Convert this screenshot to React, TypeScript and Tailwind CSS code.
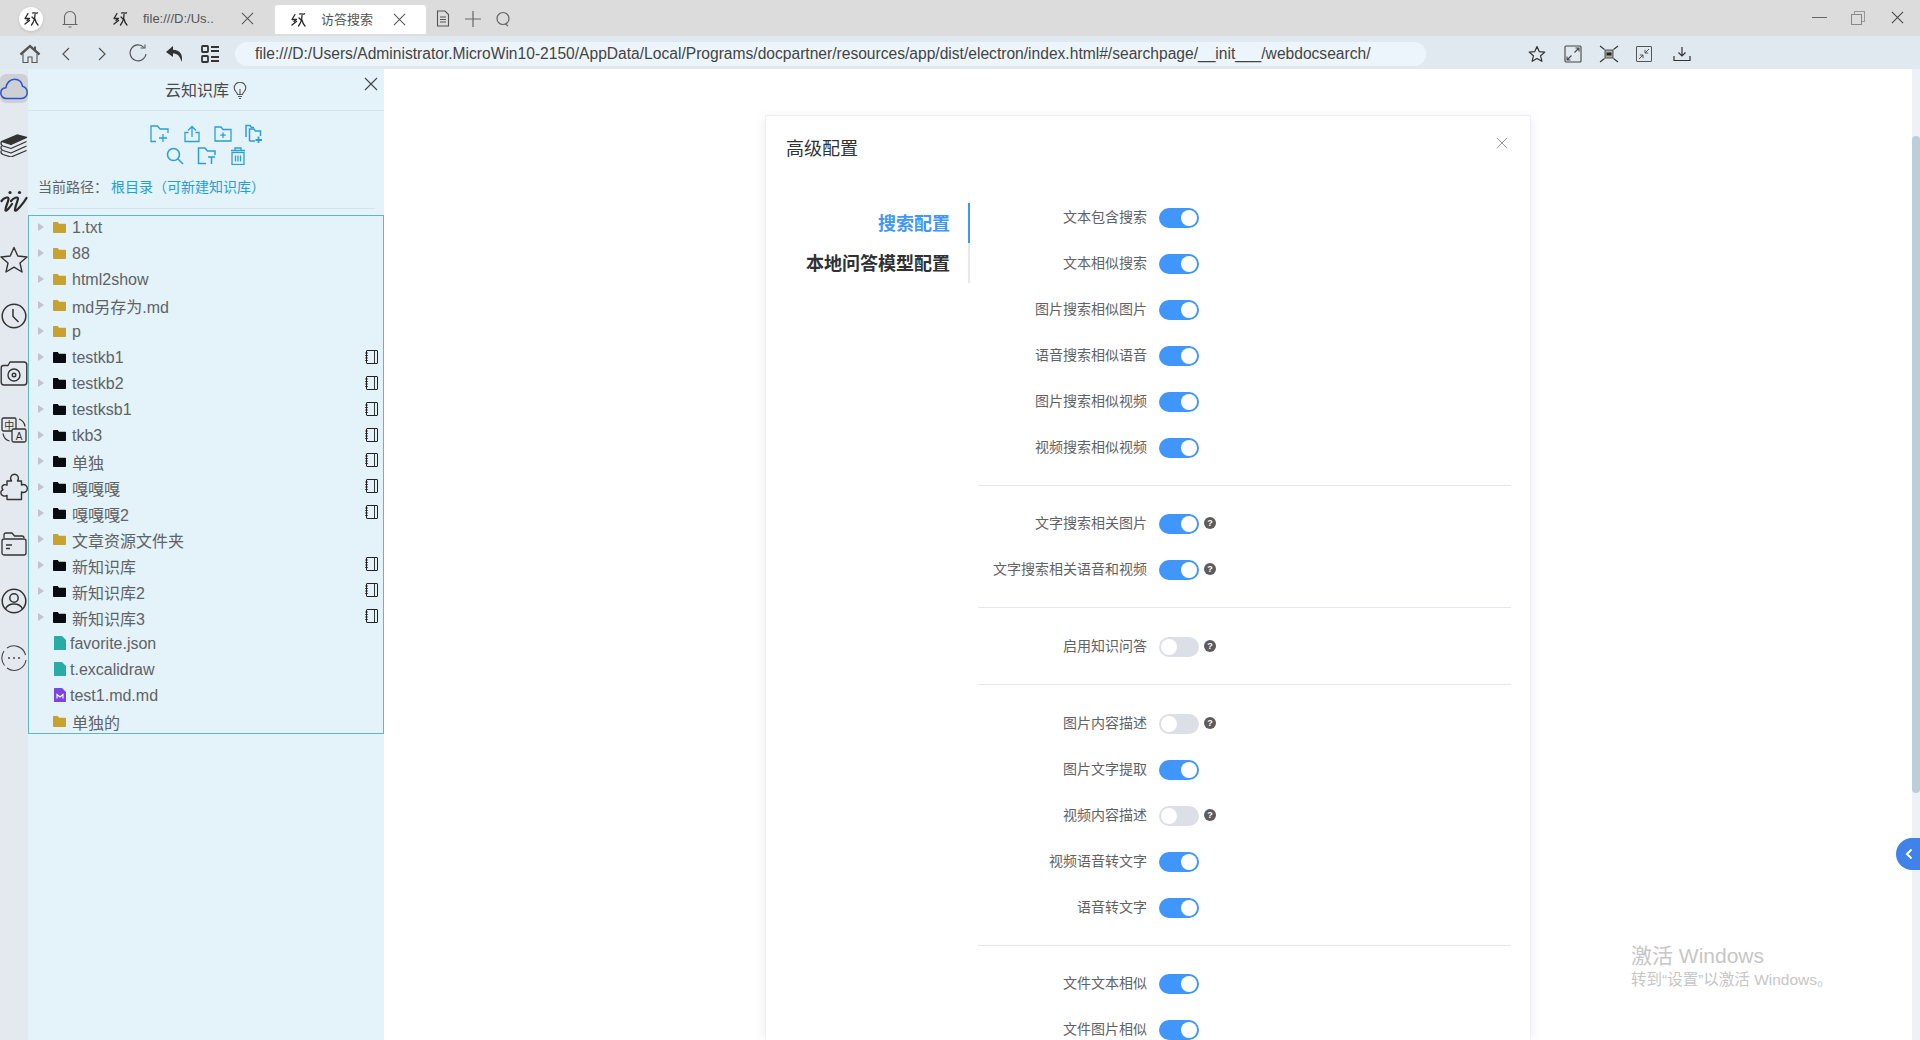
import React from "react";

const Logo = () => (
  <svg width="16" height="16" viewBox="0 0 16 16" fill="none" stroke="#2b2b2b" strokeWidth="1.3" strokeLinecap="round" strokeLinejoin="round">
    <path d="M5 2.5 L2 7.5 H6.5 L4 9.5 M2 13 L6.5 9.5" />
    <path d="M9.5 2 C11 1.2 12.5 2.8 14.5 1.8" />
    <path d="M12 3.5 C12 7 10.8 11 8.5 14 M12 8 C12.5 10.5 13.5 12.5 15 14" />
    <path d="M9 6 L10.5 7.5" />
  </svg>
);

const Bell = () => (
  <svg width="18" height="20" viewBox="0 0 18 20" fill="none" stroke="#666" strokeWidth="1.1">
    <path d="M3.5 15 V8 a5.5 5.5 0 0 1 11 0 V15 M1.5 15.5 H16.5 M7.5 18 H10.5" />
  </svg>
);

const X = ({ size = 14, color = "#555", w = 1.1 }: { size?: number; color?: string; w?: number }) => (
  <svg width={size} height={size} viewBox="0 0 14 14" fill="none" stroke={color} strokeWidth={w}>
    <path d="M1 1 L13 13 M13 1 L1 13" />
  </svg>
);

const FileDoc = () => (
  <svg width="14" height="17" viewBox="0 0 14 17" fill="none" stroke="#555" strokeWidth="1.1">
    <path d="M1.5 1 H9 L12.5 4.5 V16 H1.5 Z M4 7 H10 M4 9.5 H10 M4 12 H10" />
  </svg>
);

const Plus = () => (
  <svg width="18" height="18" viewBox="0 0 18 18" stroke="#666" strokeWidth="1.2">
    <path d="M9 1 V17 M1 9 H17" />
  </svg>
);

const SearchO = () => (
  <svg width="16" height="16" viewBox="0 0 16 16" fill="none" stroke="#666" strokeWidth="1.2">
    <circle cx="8" cy="7.5" r="6" />
    <path d="M10.5 13 L13 15" />
  </svg>
);

const Home = () => (
  <svg width="22" height="20" viewBox="0 0 22 20" fill="none" stroke="#555">
    <path d="M1.5 10.5 L11 2 L20.5 10.5" strokeWidth="2.4" />
    <path d="M4 10 V18.5 H9 V13 H13 V18.5 H18 V10" strokeWidth="1.1" />
    <path d="M16 2.5 V6" strokeWidth="2" />
  </svg>
);

const Chevron = ({ right }: { right?: boolean }) => (
  <svg width="10" height="16" viewBox="0 0 10 16" fill="none" stroke="#555" strokeWidth="1.2">
    <path d={right ? "M2 2 L8 8 L2 14" : "M8 2 L2 8 L8 14"} />
  </svg>
);

const Reload = () => (
  <svg width="20" height="20" viewBox="0 0 20 20" fill="none" stroke="#555" strokeWidth="1.1">
    <path d="M16 3.5 A8 8 0 1 0 18 10" />
    <path d="M12.5 4 H17 V0.5" />
  </svg>
);

const Undo = () => (
  <svg width="20" height="18" viewBox="0 0 20 18" fill="#333">
    <path d="M8 1 L1 7 L8 12 V8.5 C12 8.5 15 10.5 16.5 17 C18.5 10 15 5 8 4.8 Z" />
  </svg>
);

const ListGrid = () => (
  <svg width="19" height="20" viewBox="0 0 19 20" fill="none" stroke="#333" strokeWidth="1.8">
    <rect x="1" y="2" width="6" height="6" rx="0.8" />
    <rect x="1" y="12" width="6" height="6" rx="0.8" />
    <path d="M10 3 H18 M10 7 H18 M10 13 H18 M10 17 H18" />
  </svg>
);

const StarT = () => (
  <svg width="18" height="18" viewBox="0 0 18 18" fill="none" stroke="#333" strokeWidth="1.2" strokeLinejoin="round">
    <path d="M9 1.5 L11.2 6.6 L16.8 7.1 L12.6 10.8 L13.9 16.3 L9 13.4 L4.1 16.3 L5.4 10.8 L1.2 7.1 L6.8 6.6 Z" />
  </svg>
);

const ExpandBox = () => (
  <svg width="18" height="18" viewBox="0 0 18 18" fill="none" stroke="#444" strokeWidth="1.1">
    <rect x="1" y="1" width="16" height="16" rx="1" />
    <path d="M10.5 7.5 L15 3 M11.5 3 H15 V6.5 M7.5 10.5 L3 15 M3 11.5 V15 H6.5" />
  </svg>
);

const FitScreen = () => (
  <svg width="20" height="18" viewBox="0 0 20 18" fill="none" stroke="#333" strokeWidth="1.1">
    <rect x="6" y="5" width="8" height="8" fill="#aaa" strokeWidth="0.8" />
    <rect x="7.5" y="7.5" width="5" height="3" fill="#222" stroke="none" />
    <path d="M1 1 L5.5 4.5 M19 1 L14.5 4.5 M1 17 L5.5 13.5 M19 17 L14.5 13.5" />
  </svg>
);

const CollapseBox = () => (
  <svg width="16" height="16" viewBox="0 0 16 16" fill="none" stroke="#555" strokeWidth="1">
    <rect x="0.5" y="0.5" width="15" height="15" rx="0.5" />
    <path d="M13 3 L9 7 M9 3.8 V7 H12.2 M3 13 L7 9 M3.8 9 H7 V12.2" />
  </svg>
);

const Download = () => (
  <svg width="18" height="16" viewBox="0 0 18 16" fill="none" stroke="#333" strokeWidth="1.2">
    <path d="M9 1 V10 M5.5 6.5 L9 10 L12.5 6.5 M1 10 V14.5 H17 V10" />
  </svg>
);

const RailCloud = () => (
  <svg width="28" height="22" viewBox="0 0 28 22" fill="none" stroke="#2b52cf" strokeWidth="1.5" strokeLinejoin="round">
    <path d="M6.5 20.5 C3 20.5 0.8 18 0.8 15 C0.8 12 3 10 5.8 9.8 C6.5 4.8 10.3 1.2 14.5 1.2 C18.8 1.2 21.8 4.2 22.5 8.3 C25.2 9 27.2 11.5 27.2 14.5 C27.2 18 24.6 20.5 21.5 20.5 Z" />
  </svg>
);

const RailBooks = () => (
  <svg width="28" height="24" viewBox="0 0 28 24" fill="none" stroke="#333" strokeWidth="1.3" strokeLinejoin="round">
    <path d="M1.5 8.5 L17 2 L26.5 4.5 L11 11.5 Z" fill="#333" />
    <path d="M1.5 8.5 C0.5 10.5 1 12 3 13 L11 15.5 L26.5 8.5" />
    <path d="M1.5 13 C0.5 15 1 16.5 3 17.5 L11 20 L26.5 13" />
    <path d="M1.5 17.5 C0.5 19 1 20.5 3 21.5 L11 24 L26.5 17.5" />
  </svg>
);

const RailWrite = () => (
  <svg width="28" height="24" viewBox="0 0 28 24" fill="none" stroke="#2a2a2a" strokeWidth="2.2" strokeLinecap="round" strokeLinejoin="round">
    <circle cx="10" cy="2.5" r="1.6" fill="#2a2a2a" stroke="none" />
    <circle cx="19.5" cy="2.5" r="1.6" fill="#2a2a2a" stroke="none" />
    <path d="M1.5 11 C4 7.5 8 6.5 8.5 8.5 C9 11 5 17 5.5 20.5 C6.5 21.5 10 17 12 14" />
    <path d="M11 11 C13.5 7.5 18 6.5 18 8.5 C18 11 14.5 17 15 20.5 C16 22 23 14 26.5 8" />
  </svg>
);

const RailStar = () => (
  <svg width="28" height="27" viewBox="0 0 28 27" fill="none" stroke="#333" strokeWidth="1.4" strokeLinejoin="round">
    <path d="M14 1.5 L17.8 10 L27 11 L20 17 L22 26 L14 21.2 L6 26 L8 17 L1 11 L10.2 10 Z" />
  </svg>
);

const RailClock = () => (
  <svg width="26" height="26" viewBox="0 0 26 26" fill="none" stroke="#333" strokeWidth="1.5">
    <circle cx="13" cy="13" r="11.8" />
    <path d="M12 6 V13.5 L17.5 19" />
  </svg>
);

const RailCamera = () => (
  <svg width="28" height="25" viewBox="0 0 28 25" fill="none" stroke="#333" strokeWidth="1.4" strokeLinejoin="round">
    <path d="M1.2 7 Q1.2 4.5 3.5 4.5 H8 L10 1 H24 Q26.8 1 26.8 4 V21 Q26.8 24 24 24 H4 Q1.2 24 1.2 21 Z" />
    <circle cx="14" cy="14" r="6" />
    <circle cx="14" cy="14" r="1.8" />
  </svg>
);

const RailTranslate = () => (
  <svg width="26" height="26" viewBox="0 0 26 26" fill="none" stroke="#333" strokeWidth="1.3">
    <rect x="1" y="1" width="14" height="13" rx="1.5" />
    <rect x="11" y="12" width="14" height="13" rx="1.5" fill="#e3e9ef" />
    <text x="3.2" y="11.5" fontSize="10" fill="#333" stroke="none" fontFamily="'Noto Sans CJK SC', sans-serif">中</text>
    <text x="14.7" y="22.5" fontSize="10" fill="#333" stroke="none" fontFamily="'Liberation Sans', sans-serif">A</text>
    <path d="M18 2 C21 3 23.5 6 24 9.5 M2 16.5 C2.5 20 5 23 8.5 24" />
  </svg>
);

const RailPuzzle = () => (
  <svg width="28" height="28" viewBox="0 0 28 28" fill="none" stroke="#333" strokeWidth="1.4" strokeLinejoin="round">
    <path d="M7 8 H11.5 C9.5 5 11 1.2 14.5 1.2 C18 1.2 19.5 5 17.5 8 H21.5 V12 C24.5 10.5 27.3 12.5 27.3 15.5 C27.3 18.5 24.5 20.5 21.5 19 V26.5 H7 V22.5 C4 24 0.8 22.5 0.8 19.5 C0.8 18.2 1.8 17.2 3 16.8 C1.5 15.5 1.5 13 3.5 12 C4.8 11.4 6 11.6 7 12.2 Z" />
  </svg>
);

const RailFolder = () => (
  <svg width="26" height="24" viewBox="0 0 26 24" fill="none" stroke="#333" strokeWidth="1.3" strokeLinejoin="round">
    <path d="M3 6 V3 Q3 1 5 1 H11 L13.5 4 H21 Q23 4 23 6" />
    <rect x="1" y="7" width="24" height="16" rx="2" />
    <path d="M5 13 H11 M5 16.5 H9" />
  </svg>
);

const RailUser = () => (
  <svg width="26" height="26" viewBox="0 0 26 26" fill="none" stroke="#333" strokeWidth="1.5">
    <circle cx="13" cy="13" r="11.8" />
    <circle cx="13" cy="10" r="4.2" />
    <path d="M4.5 21 C6 17.5 9 16 13 16 C17 16 20 17.5 21.5 21" />
  </svg>
);

const RailMore = () => (
  <svg width="26" height="26" viewBox="0 0 26 26" fill="none" stroke="#444" strokeWidth="1.1">
    <path d="M6 3 A12 12 0 0 1 24.5 10 M25 15 A12 12 0 0 1 6 23 M3.5 20.5 A12 12 0 0 1 3 6" />
    <circle cx="8" cy="13" r="1" fill="#444" stroke="none" />
    <circle cx="13" cy="13" r="1" fill="#444" stroke="none" />
    <circle cx="18" cy="13" r="1" fill="#444" stroke="none" />
  </svg>
);

const Bulb = () => (
  <svg width="14" height="18" viewBox="0 0 14 18" fill="none" stroke="#555" strokeWidth="1.1">
    <path d="M4.5 12.5 C4 10 1.2 9 1.2 6 A5.8 5.8 0 0 1 12.8 6 C12.8 9 10 10 9.5 12.5 Z" />
    <path d="M5 14.5 H9 M6 16.5 H8" />
    <path d="M7 7 V12" />
  </svg>
);

const C = { stroke: "#2ba0d4", fill: "none", strokeWidth: 1.3 };

const TFolderPlus = () => (
  <svg width="20" height="18" viewBox="0 0 20 18" {...C}>
    <path d="M6 16.5 H1 V1 H7.5 L10 4 H18 V8" />
    <path d="M13 9 V17 M9 13 H17" />
  </svg>
);
const TUpload = () => (
  <svg width="18" height="18" viewBox="0 0 18 18" {...C}>
    <path d="M9 12 V1.5 M5 5.5 L9 1.5 L13 5.5" />
    <path d="M5.5 7.5 H2 V16.5 H16 V7.5 H12.5" />
  </svg>
);
const TFolderAdd = () => (
  <svg width="18" height="16" viewBox="0 0 18 16" {...C}>
    <path d="M1 1 H7 L9 3.5 H17 V15 H1 Z" />
    <path d="M9 6.5 V12 M6.2 9.2 H11.8" />
  </svg>
);
const TFolders = () => (
  <svg width="18" height="20" viewBox="0 0 18 20" {...C} strokeWidth={1.5}>
    <path d="M1 13 V1.5 H5 L6.5 3.5 H9" />
    <path d="M4.5 17 V5 H9 L10.5 7 H15.5 V12 M4.5 17 H10" />
    <path d="M13.5 12.5 V19 M10.5 16 H17" strokeWidth="1.8" />
  </svg>
);
const TSearch = () => (
  <svg width="18" height="18" viewBox="0 0 18 18" {...C} strokeWidth={1.6}>
    <circle cx="7.5" cy="7.5" r="6" />
    <path d="M12 12 L17 17" />
  </svg>
);
const TFolderT = () => (
  <svg width="20" height="18" viewBox="0 0 20 18" {...C} strokeWidth={1.5}>
    <path d="M9 16.5 H1.5 V1 H8 L10.5 4 H18 V8" />
    <path d="M11 10 H18 M14.5 10 V17" />
  </svg>
);
const TTrash = () => (
  <svg width="16" height="18" viewBox="0 0 16 18" {...C}>
    <path d="M1 3.5 H15 M5 3.5 V1 H11 V3.5" />
    <rect x="2" y="5.5" width="12" height="12" />
    <path d="M5.5 8.5 V14.5 M8 8.5 V14.5 M10.5 8.5 V14.5" />
  </svg>
);

const TreeFolder = ({ color }: { color: string }) => (
  <svg width="13" height="11" viewBox="0 0 13 11" fill={color}>
    <path d="M0 0.8 Q0 0 0.8 0 H4.8 L6 1.8 H12.2 Q13 1.8 13 2.6 V10.2 Q13 11 12.2 11 H0.8 Q0 11 0 10.2 Z" />
  </svg>
);

const TreeFile = ({ color, mark }: { color: string; mark?: boolean }) => (
  <svg width="12" height="14" viewBox="0 0 12 14" fill={color}>
    <path d="M0 0.5 Q0 0 0.5 0 H8 L12 4 V13.5 Q12 14 11.5 14 H0.5 Q0 14 0 13.5 Z" />
    {mark && <path d="M3 10.5 V6.5 L6 9 L9 6.5 V10.5" fill="none" stroke="#fff" strokeWidth="1.1" />}
  </svg>
);

const Notebook = () => (
  <svg width="13" height="14" viewBox="0 0 13 14" fill="none" stroke="#222" strokeWidth="1">
    <rect x="1.5" y="0.5" width="11" height="13" rx="0.5" />
    <path d="M9.5 0.5 V13.5" strokeWidth="0.9" />
    <path d="M0 3 H3 M0 5.5 H3 M0 8 H3 M0 10.5 H3" strokeWidth="0.8" />
  </svg>
);

type TreeItem = { name: string; kind: "gold" | "black" | "teal" | "purple"; noArrow?: boolean };

const tree: TreeItem[] = [
  { name: "1.txt", kind: "gold" },
  { name: "88", kind: "gold" },
  { name: "html2show", kind: "gold" },
  { name: "md另存为.md", kind: "gold" },
  { name: "p", kind: "gold" },
  { name: "testkb1", kind: "black" },
  { name: "testkb2", kind: "black" },
  { name: "testksb1", kind: "black" },
  { name: "tkb3", kind: "black" },
  { name: "单独", kind: "black" },
  { name: "嘎嘎嘎", kind: "black" },
  { name: "嘎嘎嘎2", kind: "black" },
  { name: "文章资源文件夹", kind: "gold" },
  { name: "新知识库", kind: "black" },
  { name: "新知识库2", kind: "black" },
  { name: "新知识库3", kind: "black" },
  { name: "favorite.json", kind: "teal" },
  { name: "t.excalidraw", kind: "teal" },
  { name: "test1.md.md", kind: "purple" },
  { name: "单独的", kind: "gold", noArrow: true },
];

const TreeRow = ({ item }: { item: TreeItem }) => {
  const isFile = item.kind === "teal" || item.kind === "purple";
  const cjk = /[^\x00-\x7f]/.test(item.name);
  return (
    <div className="flex h-[26px] shrink-0 items-center pr-[5px] text-[16px] text-[#606266]">
      <div className="ml-[9px] flex w-[7px] shrink-0 justify-start">
        {!isFile && !item.noArrow && (
          <span className="h-0 w-0 border-y-[4px] border-l-[6px] border-y-transparent border-l-[#c0c4cc]" />
        )}
      </div>
      {isFile ? (
        <div className="ml-[9px] flex items-center">
          <TreeFile color={item.kind === "teal" ? "#2aaca6" : "#7c45e0"} mark={item.kind === "purple"} />
          <span className="ml-[4px] mt-[2px] leading-[26px]">{item.name}</span>
        </div>
      ) : (
        <div className="ml-[8px] flex items-center">
          <TreeFolder color={item.kind === "gold" ? "#c9a22e" : "#0a0a12"} />
          <span className={cjk ? "ml-[6px] mt-[6px] leading-[26px]" : "ml-[6px] mt-[2px] leading-[26px]"}>{item.name}</span>
        </div>
      )}
      {item.kind === "black" && (
        <div className={cjk ? "ml-auto -mt-[2px]" : "ml-auto"}>
          <Notebook />
        </div>
      )}
    </div>
  );
};

const Switch = ({ on }: { on: boolean }) => (
  <div className={on ? "flex h-5 w-10 items-center justify-end rounded-full bg-[#4096fa] p-[2px]" : "flex h-5 w-10 items-center justify-start rounded-full bg-[#dcdfe6] p-[2px]"}>
    <span className="h-4 w-4 rounded-full bg-white" />
  </div>
);

const Help = () => (
  <span className="ml-[5px] -mt-[2px] flex h-3 w-3 items-center justify-center rounded-full bg-[#5c5c5f] text-[9px] font-bold leading-none text-white">?</span>
);

const Row = ({ label, on = true, help = false }: { label: string; on?: boolean; help?: boolean }) => (
  <div className="mb-[22px] flex h-6 shrink-0 items-center">
    <div className="-mt-[2px] w-[169px] text-right text-[14px] text-[#606266]">{label}</div>
    <div className="ml-3">
      <Switch on={on} />
    </div>
    {help && <Help />}
  </div>
);

const Divider = ({ extra = false }: { extra?: boolean }) => (
  <div className={extra ? "mb-[27px] mt-[3px] h-px shrink-0 bg-[#e4e7ed]" : "mb-[26px] mt-[3px] h-px shrink-0 bg-[#e4e7ed]"} />
);

export default function App() {
  return (
    <div className="flex h-screen w-full flex-col overflow-hidden bg-white font-['Liberation_Sans','Noto_Sans_CJK_SC',sans-serif]">
      {/* tab strip */}
      <div className="flex h-9 shrink-0 items-center bg-[#dcdcdc] pt-[1px]">
        <div className="ml-[19px] flex h-6 w-6 items-center justify-center rounded-full bg-white shadow-[0_1px_3px_rgba(0,0,0,0.15)]">
          <Logo />
        </div>
        <div className="ml-[18px]">
          <Bell />
        </div>
        <div className="ml-[33px] flex items-center">
          <Logo />
        </div>
        <span className="ml-[15px] w-[80px] text-[13px] text-[#555]">file:///D:/Us..</span>
        <div className="ml-[18px]">
          <X size={13} />
        </div>
        <div className="ml-[21px] flex h-[29px] w-[151px] translate-y-[4px] items-center self-start rounded-t-[3px] bg-white pl-[15px]">
          <Logo />
          <span className="ml-[15px] text-[13px] text-[#555]">访答搜索</span>
          <span className="ml-[20px]">
            <X size={13} />
          </span>
        </div>
        <div className="ml-[10px]">
          <FileDoc />
        </div>
        <div className="ml-[14px]">
          <Plus />
        </div>
        <div className="ml-[13px]">
          <SearchO />
        </div>
        <div className="-mt-[2px] ml-auto flex items-center">
          <div className="h-px w-[15px] bg-[#666]" />
          <div className="relative ml-[24px] h-[14px] w-[14px]">
            <div className="absolute right-0 top-0 h-[11px] w-[11px] border border-[#999]" />
            <div className="absolute bottom-0 left-0 h-[11px] w-[11px] border border-[#888] bg-[#dcdcdc]" />
          </div>
          <div className="ml-[26px] mr-[16px]">
            <X size={13} color="#444" />
          </div>
        </div>
      </div>

      {/* toolbar */}
      <div className="flex h-[33px] shrink-0 items-center bg-[#e1e9f0] pt-[3px]">
        <div className="ml-[19px]"><Home /></div>
        <div className="ml-[20px]"><Chevron /></div>
        <div className="ml-[26px]"><Chevron right /></div>
        <div className="ml-[21px]"><Reload /></div>
        <div className="ml-[17px]"><Undo /></div>
        <div className="ml-[16px]"><ListGrid /></div>
        <div className="ml-[15px] flex h-[24px] w-[1191px] items-center rounded-full bg-[#edf5fc] pl-[20px] text-[15.6px] text-[#444]">
          file:///D:/Users/Administrator.MicroWin10-2150/AppData/Local/Programs/docpartner/resources/app/dist/electron/index.html#/searchpage/__init___/webdocsearch/
        </div>
        <div className="ml-[102px]"><StarT /></div>
        <div className="ml-[18px]"><ExpandBox /></div>
        <div className="ml-[17px]"><FitScreen /></div>
        <div className="ml-[17px]"><CollapseBox /></div>
        <div className="ml-[21px]"><Download /></div>
      </div>

      {/* body */}
      <div className="relative flex min-h-0 flex-1">
        {/* rail */}
        <div className="flex w-[28px] shrink-0 flex-col items-center bg-[#e3e9ef]">
          <div className="mt-[5px] flex h-[29px] w-[28px] items-center justify-center rounded-[6px] bg-[#cdd0d4]">
            <RailCloud />
          </div>
          <div className="mt-[28px] flex h-[28px] items-center"><RailBooks /></div>
          <div className="mt-[29px] flex h-[28px] items-center"><RailWrite /></div>
          <div className="mt-[29px] flex h-[28px] items-center"><RailStar /></div>
          <div className="mt-[29px] flex h-[28px] items-center"><RailClock /></div>
          <div className="mt-[29px] flex h-[28px] items-center"><RailCamera /></div>
          <div className="mt-[29px] flex h-[28px] items-center"><RailTranslate /></div>
          <div className="mt-[29px] flex h-[28px] items-center"><RailPuzzle /></div>
          <div className="mt-[29px] flex h-[28px] items-center"><RailFolder /></div>
          <div className="mt-[29px] flex h-[28px] items-center"><RailUser /></div>
          <div className="mt-[29px] flex h-[28px] items-center"><RailMore /></div>
        </div>

        {/* sidebar */}
        <div className="flex w-[356px] shrink-0 flex-col bg-[#e4f2fa]">
          <div className="relative flex h-[42px] shrink-0 items-center justify-center border-b border-[#d6e2e9] pt-[3px] text-[16px] text-[#4a4a4a]">
            <span>云知识库</span>
            <span className="ml-[4px]"><Bulb /></span>
            <button className="absolute right-[6px] top-[8px]"><X size={14} color="#444" /></button>
          </div>
          <div className="mt-[12px] flex h-[22px] items-center justify-center gap-[13px]">
            <TFolderPlus />
            <TUpload />
            <TFolderAdd />
            <TFolders />
          </div>
          <div className="flex h-[21px] items-center justify-center gap-[13px]">
            <TSearch />
            <TFolderT />
            <TTrash />
          </div>
          <div className="ml-[10px] mt-[11px] flex h-[20px] items-center text-[14px]">
            <span className="text-[#606266]">当前路径：</span>
            <span className="ml-[3px] text-[#26a0d0]">根目录（可新建知识库）</span>
          </div>
          <div className="ml-[10px] mr-[9px] mt-[11px] h-px bg-[#d7e2e8]" />
          <div className="mt-[6px] flex h-[519px] flex-col overflow-hidden border border-[#5fb6c6]">
            <div className="-mt-[2px] flex flex-col">
              {tree.map((t) => (
                <TreeRow key={t.name} item={t} />
              ))}
            </div>
          </div>
        </div>

        {/* main */}
        <div className="flex min-w-0 flex-1 justify-center overflow-hidden pt-[46px]">
          <div className="flex w-[766px] shrink-0 flex-col rounded-[2px] border-x border-t border-[#ebeef5] shadow-[0_2px_12px_rgba(0,0,0,0.08)]">
            <div className="relative flex h-[87px] shrink-0 items-start pl-[20px] pt-[21px]">
              <span className="text-[18px] leading-[24px] text-[#303133]">高级配置</span>
              <span className="absolute right-[22px] top-[21px]"><X size={12} color="#909399" /></span>
            </div>
            <div className="flex">
              <div className="w-[204px] shrink-0">
                <div className="flex h-10 items-center justify-end border-r-2 border-[#4096fa] pr-[18px] pt-[2px] text-[18px] font-bold text-[#4096fa]">搜索配置</div>
                <div className="flex h-10 items-center justify-end border-r-2 border-[#e4e7ed] pr-[18px] pt-[2px] text-[18px] font-bold text-[#303133]">本地问答模型配置</div>
              </div>
              <div className="ml-[8px] flex w-[533px] shrink-0 flex-col pt-[3px]">
                <Row label="文本包含搜索" />
                <Row label="文本相似搜索" />
                <Row label="图片搜索相似图片" />
                <Row label="语音搜索相似语音" />
                <Row label="图片搜索相似视频" />
                <Row label="视频搜索相似视频" />
                <Divider />
                <Row label="文字搜索相关图片" help />
                <Row label="文字搜索相关语音和视频" help />
                <Divider extra />
                <Row label="启用知识问答" on={false} help />
                <Divider extra />
                <Row label="图片内容描述" on={false} help />
                <Row label="图片文字提取" />
                <Row label="视频内容描述" on={false} help />
                <Row label="视频语音转文字" />
                <Row label="语音转文字" />
                <Divider />
                <Row label="文件文本相似" />
                <Row label="文件图片相似" />
              </div>
            </div>
          </div>
        </div>

        {/* scrollbar */}
        <div className="flex w-2 shrink-0 flex-col bg-[#eef2f7] pt-[67px]">
          <div className="h-[657px] rounded-full bg-[#bccfd8]" />
        </div>

        {/* side handle */}
        <div className="absolute right-0 top-[769px] flex h-[32px] w-[24px] items-center justify-center rounded-l-full bg-[#3f83ea] pl-[2px]">
          <svg width="8" height="12" viewBox="0 0 8 12" fill="none" stroke="#fff" strokeWidth="2">
            <path d="M6.5 1.5 L2 6 L6.5 10.5" />
          </svg>
        </div>

        {/* watermark */}
        <div className="pointer-events-none absolute left-[1631px] top-[874px] text-[#c6c6c6]">
          <div className="text-[21px] leading-[26px]">激活 Windows</div>
          <div className="text-[15.5px] leading-[22px]">转到“设置”以激活 Windows。</div>
        </div>
      </div>
    </div>
  );
}
